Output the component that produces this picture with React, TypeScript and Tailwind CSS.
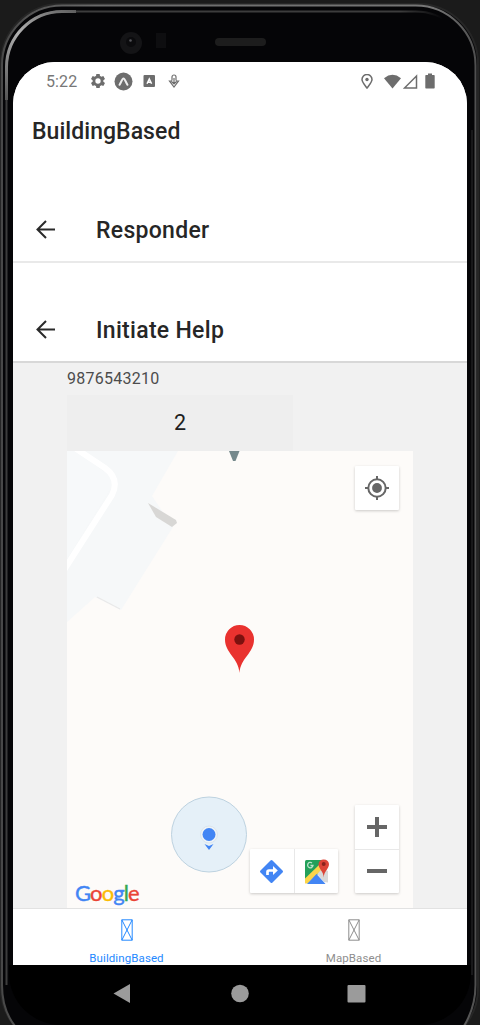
import React from "react";

function PhoneFrame() {
  return (
    <svg className="absolute inset-0" width="480" height="1025" viewBox="0 0 480 1025" fill="none">
      <defs>
        <linearGradient id="rim" x1="0" y1="0" x2="480" y2="0" gradientUnits="userSpaceOnUse">
          <stop offset="0" stopColor="#484848" />
          <stop offset="0.2" stopColor="#6a6a6a" />
          <stop offset="0.9" stopColor="#777" />
          <stop offset="1" stopColor="#4c4c4c" />
        </linearGradient>
        <linearGradient id="shine" x1="0" y1="110" x2="90" y2="0" gradientUnits="userSpaceOnUse">
          <stop offset="0" stopColor="#444" />
          <stop offset="0.5" stopColor="#b0b0b0" />
          <stop offset="1" stopColor="#444" />
        </linearGradient>
        <linearGradient id="inner" x1="400" y1="0" x2="471" y2="0" gradientUnits="userSpaceOnUse">
          <stop offset="0" stopColor="#3d3d3d" />
          <stop offset="0.6" stopColor="#050507" />
        </linearGradient>
      </defs>
      <rect x="1" y="4" width="477" height="1044" rx="60" fill="#050507" stroke="#262626" strokeWidth="2" />
      <path d="M2 985V66A60 60 0 0 1 62 5.500H415A60 60 0 0 1 475.500 66V985C475.500 1002 470 1016 464 1026M2 985C2 1002 7 1016 15 1026" stroke="url(#rim)" strokeWidth="2" />
      <path d="M6.500 985V67A56 56 0 0 1 62 11.500H415A56 56 0 0 1 471 60" stroke="url(#inner)" strokeWidth="2" />
      <path d="M6.500 100V67A56 56 0 0 1 62 11.500H76" stroke="url(#shine)" strokeWidth="3" />
      <path d="M472 130V975" stroke="#18181a" strokeWidth="2" />
      <circle cx="131" cy="43" r="11" fill="#141416" />
      <circle cx="131" cy="42" r="5" fill="#0b0b0d" />
      <circle cx="130.500" cy="40.500" r="1.300" fill="#55555a" />
      <rect x="156" y="33" width="10" height="15" fill="#0e0e10" />
      <rect x="215" y="38" width="51" height="8" rx="4" fill="#1d1d1d" />
    </svg>
  );
}

function StatusBar() {
  return (
    <div className="h-[38px] shrink-0 flex items-center justify-between pl-[33px] pr-[32px] text-[#6d6d6d]">
      <div className="flex items-center">
        <span className="w-[44px] pt-[1px] text-[16px] leading-none tracking-[0.1px] text-[#777]">5:22</span>
        <svg width="16" height="16" viewBox="0 0 24 24" fill="currentColor" fillRule="evenodd">
          <path d="M20 13.200a8 8 0 0 0 0-2.400l2.500-1.900-2.500-4.300-2.900 1.200a8 8 0 0 0-2.100-1.200L14.500 1.500h-5L9 4.600a8 8 0 0 0-2.100 1.200L4 4.600 1.500 8.900 4 10.800a8 8 0 0 0 0 2.400l-2.500 1.900L4 19.400l2.900-1.200A8 8 0 0 0 9 19.400l.5 3.100h5l.5-3.100a8 8 0 0 0 2.100-1.200l2.900 1.200 2.500-4.300zM12 16a4 4 0 1 1 0-8 4 4 0 0 1 0 8z" />
        </svg>
        <svg className="ml-[8px]" width="19" height="19" viewBox="0 0 19 19" fill="none">
          <circle cx="9.500" cy="9.500" r="9" fill="currentColor" />
          <path d="M5.500 12.800C7 11 8 6.500 9.500 6.500S12 11 13.500 12.800" stroke="#eee" strokeWidth="2" strokeLinecap="round" />
        </svg>
        <svg className="ml-[10px]" width="13" height="14" viewBox="0 0 13 14" fill="none">
          <rect x=".5" y="1" width="11.500" height="12" rx="1" fill="currentColor" />
          <path d="M4 9.800 6.300 5l2.300 4.800M5 8.300H7.800" stroke="#fff" strokeWidth="1.500" />
        </svg>
        <svg className="ml-[12px]" width="12" height="15" viewBox="0 0 12 15" fill="none" stroke="currentColor" strokeWidth="1.200">
          <path d="M4 6.500V3a2 2 0 0 1 4 0v3.500M6 4v5M4 7H1.500L6 13l4.500-6H8M3.500 7.500 6 10l2.500-2.500" />
        </svg>
      </div>
      <div className="flex items-center">
        <svg width="12" height="15" viewBox="0 0 12 15" fill="none" stroke="currentColor" strokeWidth="1.500">
          <path d="M6 14C3 10 1 8 1 5.500a5 5 0 0 1 10 0C11 8 9 10 6 14z" />
          <circle cx="6" cy="5.500" r="1.700" fill="currentColor" stroke="none" />
        </svg>
        <svg className="ml-[11px]" width="17" height="15" viewBox="0 0 17 15" fill="currentColor">
          <path d="M0 4.200Q8.500-2.700 17 4.200L8.500 14.500z" />
        </svg>
        <svg className="ml-[2px]" width="15" height="15" viewBox="0 0 15 15" fill="none" stroke="currentColor" strokeWidth="1.500">
          <path d="M1.500 14H13.500V2z" />
        </svg>
        <svg className="ml-[7px]" width="10" height="16" viewBox="0 0 10 16" fill="currentColor">
          <path d="M1 2h2V.5h4V2h2q.7 0 .7.800v12q0 .8-.7.800H1q-.7 0-.7-.8v-12Q.3 2 1 2z" />
        </svg>
      </div>
    </div>
  );
}

function BackHeader({ title, tone }: { title: string; tone: string }) {
  return (
    <div className={"h-[100px] shrink-0 flex items-end bg-white border-b-2 " + tone}>
      <div className="h-[63px] w-full flex items-center pl-[23px]">
        <svg className="shrink-0" width="20" height="20" viewBox="0 0 20 20" fill="none" stroke="#2a2a2a" strokeWidth="2">
          <path d="M19 9.500H2M10 1 1.500 9.500 10 18" />
        </svg>
        <h2 className="ml-[40px] pt-[1px] text-[23px] tracking-[0.3px] leading-none font-medium text-[#262626]">{title}</h2>
      </div>
    </div>
  );
}

function MapView() {
  return (
    <div className="relative ml-[54px] w-[346px] h-[458px] bg-[#fdfbf9] overflow-hidden">
      <svg className="absolute inset-0" width="346" height="458" viewBox="67 451 346 458" fill="none">
        <path d="M67 451H178L152 496 173 527 121 610 95 597 67 622z" fill="#f6f8f9" />
        <path d="M67 451H77L109 475Q114 481 110 490L67 560z" fill="#f7f9fa" />
        <path d="M72 446 105 468Q120 479 112 495L64 570" stroke="#fff" strokeWidth="6" />
        <path d="M148 503 176 520 177 523 172 527 156 517z" fill="#d8d7d5" />
        <path d="M97 597 120 609" stroke="#e9e9e9" strokeWidth="1.200" />
        <path d="M229 451H239.500L235.500 461H233z" fill="#75898c" />
        <path d="M239.500 673C238.500 658 225 653 225 639.500a14.500 14.500 0 0 1 29 0C254 653 240.500 658 239.500 673z" fill="#e9322f" />
        <circle cx="239.500" cy="639.500" r="5.200" fill="#7c110f" />
        <circle cx="209" cy="834.500" r="37.500" fill="#e5f0f8" stroke="#bdd2e0" />
        <circle cx="209" cy="834.500" r="8.500" fill="#eef3f7" stroke="#d5e0e8" strokeWidth=".7" />
        <circle cx="209" cy="834.500" r="6.500" fill="#4285f4" />
        <path d="M204.500 844 209 846 213.500 844 209 850z" fill="#4285f4" />
      </svg>
      <div className="absolute left-[288px] top-[15px] size-[44px] bg-white rounded-[1px] shadow-[0_1px_3px_#0003] grid place-items-center">
        <svg width="26" height="26" viewBox="0 0 26 26" fill="none" stroke="#666" strokeWidth="2">
          <circle cx="13" cy="13" r="8.700" />
          <circle cx="13" cy="13" r="4.900" fill="#666" stroke="none" />
          <path d="M13 1v4M13 21v4M1 13h4M21 13h4" />
        </svg>
      </div>
      <div className="absolute left-[288px] top-[354px] w-[44px] h-[88px] bg-white rounded-[1px] shadow-[0_1px_3px_#0003] flex flex-col">
        <div className="flex-1 grid place-items-center border-b border-[#e8e8e8]">
          <svg width="20" height="20" viewBox="0 0 20 20" stroke="#666" strokeWidth="4"><path d="M0 10h20M10 0v20" /></svg>
        </div>
        <div className="flex-1 grid place-items-center">
          <svg width="20" height="20" viewBox="0 0 20 20" stroke="#666" strokeWidth="4"><path d="M0 10h20" /></svg>
        </div>
      </div>
      <div className="absolute left-[183px] top-[398px] w-[88px] h-[44px] bg-white rounded-[1px] shadow-[0_1px_3px_#0003] flex">
        <div className="flex-1 grid place-items-center border-r border-[#e8e8e8]">
          <svg width="23" height="23" viewBox="0 0 23 23" fill="none">
            <path d="M10.500.5q1-1 2 0l10 10q1 1 0 2l-10 10q-1 1-2 0l-10-10q-1-1 0-2z" fill="#4285f4" />
            <path d="M7.500 15v-3q0-1.500 1.500-1.500h6" stroke="#fff" strokeWidth="2.700" />
            <path d="M13 6 17.800 10.500 13 15z" fill="#fff" />
          </svg>
        </div>
        <div className="flex-1 grid place-items-center">
          <svg width="26" height="26" viewBox="0 0 26 26" fill="none">
            <path d="M3.500 2H20V13L2 25V3.500Q2 2 3.500 2z" fill="#23a05a" />
            <path d="M18 10 25 13V24.500L21 24 14 16z" fill="#d9d9d9" />
            <path d="M2 20.500 16 7 18 12 5 25.500H2z" fill="#fbd54a" />
            <path d="M4 26 13.500 16 22.500 26z" fill="#4285f4" />
            <path d="M7.500 7.500H10a2.700 2.700 0 1 1-1-2.500" stroke="#bce2cb" strokeWidth="1.300" />
            <path d="M20.700 19.500C20.500 13 15.500 11 15.500 6a5.300 5.300 0 0 1 10.500 0C26 11 21 13 20.700 19.500z" fill="#dc4437" />
            <circle cx="20.700" cy="6" r="2" fill="#8b231d" />
          </svg>
        </div>
      </div>
      <div className="absolute left-[8px] top-[429px] font-['Lato'] text-[22px] leading-[26px] tracking-[-0.9px] font-normal [-webkit-text-stroke:0.4px_currentColor]">
        <span className="text-[#4285f4]">G</span><span className="text-[#ea4335]">o</span><span className="text-[#fbbc05]">o</span><span className="text-[#4285f4]">g</span><span className="text-[#34a853]">l</span><span className="text-[#ea4335]">e</span>
      </div>
    </div>
  );
}

function Tab({ label, color }: { label: string; color: string }) {
  return (
    <div className={"flex-1 flex flex-col items-center pt-[10px] " + color}>
      <svg width="12" height="22" viewBox="0 0 12 22" fill="none" stroke="currentColor" strokeWidth="1">
        <path d="M.8.8H11.200V21.200H.8zM.8.8 11.200 21.200M11.200.8.800 21.200" />
      </svg>
      <span className="mt-[10px] text-[11.500px] leading-[14px] tracking-[0.1px]">{label}</span>
    </div>
  );
}

export default function App() {
  return (
    <div className="relative w-[480px] h-[1025px] overflow-hidden bg-[#1b1b1b] font-['Roboto',sans-serif]">
      <PhoneFrame />
      <div className="relative h-full pt-[62px] px-[13px] flex flex-col">
        <div className="h-[903px] w-[454px] shrink-0 bg-[#f1f1f1] rounded-t-[42px] overflow-hidden flex flex-col">
          <div className="bg-white">
            <StatusBar />
            <h1 className="h-[63px] flex items-center pl-[19px] text-[23px] tracking-[0.05px] font-medium leading-none text-[#262626]">BuildingBased</h1>
          </div>
          <BackHeader title="Responder" tone="border-[#e9e9e9]" />
          <BackHeader title="Initiate Help" tone="border-[#d8d8d8]" />
          <p className="h-[32px] shrink-0 pl-[54px] pt-[7px] text-[16px] leading-[18px] tracking-[0.25px] text-[#4c4c4c]">9876543210</p>
          <div className="ml-[54px] w-[226px] h-[56px] shrink-0 bg-[#eeeeee] grid place-items-center text-[21.500px] text-[#202020]">2</div>
          <MapView />
          <nav className="h-[57px] shrink-0 bg-white border-t border-[#e2e2e2] flex">
            <Tab label="BuildingBased" color="text-[#2489ff]" />
            <Tab label="MapBased" color="text-[#8e8e8e]" />
          </nav>
        </div>
        <div className="h-[60px] -mx-[4px] px-[4px] bg-black rounded-b-[52px]">
          <svg width="454" height="57" viewBox="13 965 454 57" fill="#9b9b9b">
            <path d="M113.500 993.500 130 984V1003z" />
            <circle cx="240" cy="993.500" r="8.800" />
            <rect x="347.500" y="985" width="18" height="17.500" rx="1" />
          </svg>
        </div>
      </div>
    </div>
  );
}
